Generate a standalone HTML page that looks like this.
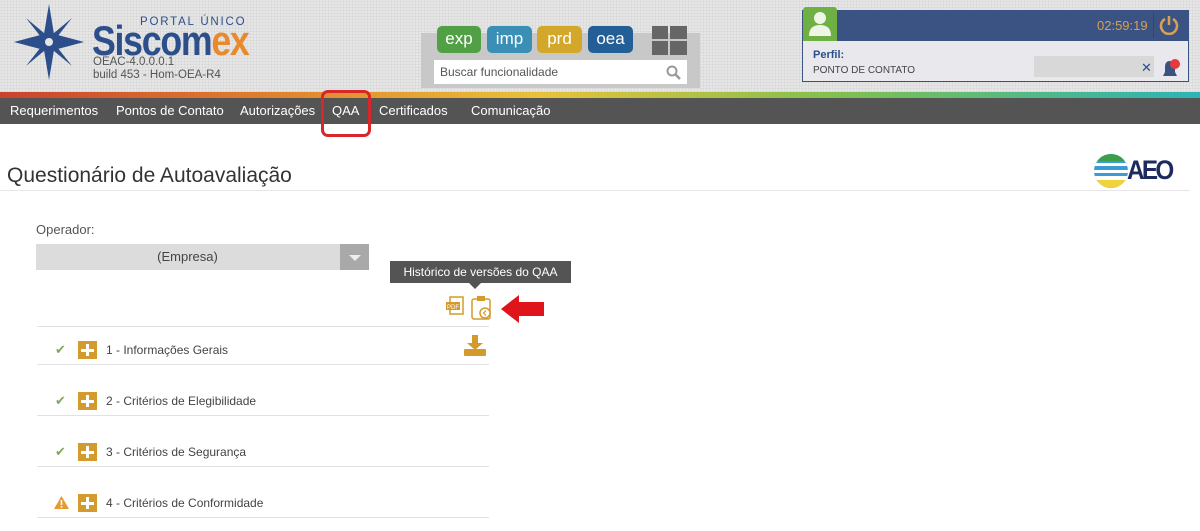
<!DOCTYPE html>
<html><head><meta charset="utf-8"><style>
*{margin:0;padding:0;box-sizing:border-box}
body{width:1200px;height:531px;overflow:hidden;background:#fff;font-family:"Liberation Sans","DejaVu Sans",sans-serif;position:relative}
.a{position:absolute}
.hdr{left:0;top:0;width:1200px;height:93px;background:#e6e6e6;background-image:radial-gradient(#d6d6d6 1px,transparent 1px);background-size:3px 3px}
.btn{top:26px;height:27px;border-radius:5px;color:#fff;font-size:17px;text-align:center;line-height:26px}
.nav{left:0;top:98px;width:1200px;height:26px;background:#545454;color:#fff;font-size:13px}
.nav span{position:absolute;top:5px}
.row{left:37px;width:452px;height:1px;background:#e2e2e2}
.rt{font-size:12px;color:#444;left:106px}
.plus{left:78px;width:19px;height:18px;background:#d39a2e}
.plus:before{content:"";position:absolute;left:8px;top:3px;width:3px;height:12px;background:#fff}
.plus:after{content:"";position:absolute;left:3px;top:7.5px;width:13px;height:3px;background:#fff}
.chk{left:55px;color:#7fa85a;font-size:13px}
</style></head><body>
<div class="a hdr"></div>
<svg class="a" style="left:14px;top:4px" width="70" height="76" viewBox="0 0 70 76">
<polygon points="35,0 40,30 70,38 40,46 35,76 30,46 0,38 30,30" fill="#2c4f8c"/>
<polygon points="12,14 36,34 58,62 34,42" fill="#2c4f8c"/>
<polygon points="58,14 36,42 12,62 34,34" fill="#2c4f8c"/>
<circle cx="35" cy="38" r="4" fill="#e6e6e6"/>
</svg>
<div class="a" style="left:140px;top:16px;font-size:11.5px;letter-spacing:1.8px;color:#2c4f8c">PORTAL ÚNICO</div>
<div class="a" style="left:92px;top:20px;font-size:42px;line-height:42px;font-weight:bold;letter-spacing:-1.5px;color:#2c4f8c;transform:scaleX(0.85);transform-origin:left top">Siscom<span style="color:#e8892d">ex</span></div>
<div class="a" style="left:93px;top:56px;font-size:11.5px;color:#555;line-height:13px">OEAC-4.0.0.0.1<br>build 453 - Hom-OEA-R4</div>
<div class="a" style="left:421px;top:33px;width:279px;height:55px;background:#c8c8c8"></div>
<div class="a btn" style="left:437px;width:44px;background:#52a046">exp</div>
<div class="a btn" style="left:487px;width:45px;background:#3a8fb5">imp</div>
<div class="a btn" style="left:537px;width:45px;background:#d3a82a">prd</div>
<div class="a btn" style="left:588px;width:45px;background:#245e97">oea</div>
<div class="a" style="left:652px;top:26px;width:16px;height:13px;background:#666"></div>
<div class="a" style="left:670px;top:26px;width:17px;height:13px;background:#666"></div>
<div class="a" style="left:652px;top:41px;width:16px;height:14px;background:#666"></div>
<div class="a" style="left:670px;top:41px;width:17px;height:14px;background:#666"></div>
<div class="a" style="left:434px;top:60px;width:253px;height:24px;background:#fff;font-size:12px;color:#555;padding:5px 6px">Buscar funcionalidade</div>
<svg class="a" style="left:666px;top:65px" width="15" height="15"><circle cx="6" cy="6" r="4.5" stroke="#999" stroke-width="2" fill="none"/><line x1="9.5" y1="9.5" x2="14" y2="14" stroke="#999" stroke-width="2.5"/></svg>
<div class="a" style="left:802px;top:10px;width:387px;height:72px;border:1px solid #3b5383;background:#e9e9ed"></div>
<div class="a" style="left:802px;top:10px;width:387px;height:31px;background:#3b5383"></div>
<div class="a" style="left:803px;top:7px;width:34px;height:34px;background:#6fb045;border-radius:3px 3px 0 0"></div>
<svg class="a" style="left:806px;top:11px" width="30" height="26"><circle cx="14" cy="7" r="6" fill="#eef5e6"/><path d="M3 25 Q3 14 14 14 Q25 14 25 25Z" fill="#eef5e6"/></svg>
<div class="a" style="left:1097px;top:18px;color:#d9a055;font-size:13px">02:59:19</div>
<div class="a" style="left:1153px;top:12px;width:1px;height:26px;background:#2f466f"></div>
<svg class="a" style="left:1159px;top:15px" width="20" height="20"><path d="M6 4 A8 8 0 1 0 14 4" stroke="#d9a055" stroke-width="2.5" fill="none"/><line x1="10" y1="1" x2="10" y2="10" stroke="#d9a055" stroke-width="2.5"/></svg>
<div class="a" style="left:813px;top:49px;font-size:11px;color:#2c4f8c;font-weight:bold">Perfil:</div>
<div class="a" style="left:813px;top:65px;font-size:10px;color:#444">PONTO DE CONTATO</div>
<div class="a" style="left:1034px;top:56px;width:120px;height:21px;background:#d8d8d8"></div>
<div class="a" style="left:1141px;top:60px;font-size:13px;color:#2c4f8c;font-weight:bold">✕</div>
<svg class="a" style="left:1160px;top:57px" width="22" height="22"><path d="M3 19 L5 15 L5 10 Q5 4 10 4 Q15 4 15 10 L15 15 L17 19Z" fill="#3b5383"/><circle cx="15" cy="7" r="5" fill="#e63a3a"/></svg>
<div class="a" style="left:0;top:92px;width:1200px;height:6px;background:linear-gradient(90deg,#c9422f,#e2882d 25%,#e8c23a 45%,#7fc04f 70%,#2bb3b8 100%)"></div>
<div class="a nav">
<span style="left:10px">Requerimentos</span><span style="left:116px">Pontos de Contato</span><span style="left:240px">Autorizações</span><span style="left:332px">QAA</span><span style="left:379px">Certificados</span><span style="left:471px">Comunicação</span>
</div>
<div class="a" style="left:321px;top:90px;width:50px;height:47px;border:3px solid #d8262a;border-radius:7px"></div>
<div class="a" style="left:7px;top:164px;font-size:21px;color:#333">Questionário de Autoavaliação</div>
<div class="a" style="left:0;top:190px;width:1190px;height:1px;background:#e6e6e6"></div>
<svg class="a" style="left:1093px;top:151px" width="96" height="40">
<defs><clipPath id="c"><circle cx="18" cy="20" r="17"/></clipPath></defs>
<g clip-path="url(#c)"><rect x="0" y="0" width="40" height="40" fill="#3a9bd6"/><rect x="0" y="3" width="40" height="7" fill="#3a9e4a"/><rect x="0" y="12" width="40" height="3" fill="#fff"/><rect x="0" y="19" width="40" height="3" fill="#fff"/><rect x="0" y="25" width="40" height="4" fill="#fff"/><rect x="0" y="29" width="40" height="12" fill="#f0d33a"/></g>
<text x="0" y="0" transform="translate(34,28) scale(0.9,1)" font-family="Liberation Sans" font-weight="bold" font-size="27" letter-spacing="-3" fill="#1c2a5e">AEO</text></svg>
<div class="a" style="left:36px;top:222px;font-size:13px;color:#555">Operador:</div>
<div class="a" style="left:36px;top:244px;width:333px;height:26px;background:#dcdcdc;font-size:13px;color:#444;text-align:center;line-height:26px;padding-right:30px">(Empresa)</div>
<div class="a" style="left:340px;top:244px;width:29px;height:26px;background:#a9a9a9"></div>
<div class="a" style="left:349px;top:255px;border-left:6px solid transparent;border-right:6px solid transparent;border-top:6px solid #eee"></div>
<div class="a" style="left:390px;top:261px;width:181px;height:22px;background:#545454;color:#fff;font-size:12px;line-height:22px;text-align:center">Histórico de versões do QAA</div>
<div class="a" style="left:469px;top:283px;border-left:6px solid transparent;border-right:6px solid transparent;border-top:6px solid #545454"></div>
<svg class="a" style="left:445px;top:295px" width="48" height="25"><rect x="5" y="2" width="13" height="17" fill="none" stroke="#d39a2e" stroke-width="1.5"/><rect x="1" y="7" width="14" height="8" fill="#d39a2e"/><text x="2" y="14" font-size="6" fill="#fff" font-family="Liberation Sans">PDF</text><rect x="27" y="4" width="18" height="20" rx="2" fill="none" stroke="#d39a2e" stroke-width="1.5"/><rect x="32" y="1" width="8" height="5" fill="#d39a2e"/><circle cx="40" cy="18" r="5" fill="#fff" stroke="#d39a2e" stroke-width="1.5"/><path d="M41 15.5 L38.5 18 L41 20.5" stroke="#d39a2e" stroke-width="1.2" fill="none"/></svg>
<svg class="a" style="left:501px;top:295px" width="43" height="28"><polygon points="0,14 18,0 18,7 43,7 43,21 18,21 18,28" fill="#e0141b"/></svg>
<div class="a" style="left:37px;top:326px;width:452px;height:1px;background:#e2e2e2"></div>
<svg class="a" style="left:463px;top:335px" width="24" height="22"><rect x="9" y="0" width="6" height="8" fill="#d39a2e"/><polygon points="4,8 20,8 12,15" fill="#d39a2e"/><rect x="1" y="14" width="22" height="7" rx="1" fill="#d39a2e"/></svg>
<div class="a chk" style="top:342px">✔</div><div class="a plus" style="top:341px"></div><div class="a rt" style="top:343px">1 - Informações Gerais</div>
<div class="a row" style="top:364px"></div>
<div class="a chk" style="top:393px">✔</div><div class="a plus" style="top:392px"></div><div class="a rt" style="top:394px">2 - Critérios de Elegibilidade</div>
<div class="a row" style="top:415px"></div>
<div class="a chk" style="top:444px">✔</div><div class="a plus" style="top:443px"></div><div class="a rt" style="top:445px">3 - Critérios de Segurança</div>
<div class="a row" style="top:466px"></div>
<svg class="a" style="left:54px;top:496px" width="15" height="13"><polygon points="7.5,0 15,13 0,13" fill="#e59a2e"/><rect x="6.7" y="4" width="1.6" height="5" fill="#fff"/><rect x="6.7" y="10" width="1.6" height="1.6" fill="#fff"/></svg>
<div class="a plus" style="top:494px"></div><div class="a rt" style="top:496px">4 - Critérios de Conformidade</div>
<div class="a row" style="top:517px"></div>
</body></html>
